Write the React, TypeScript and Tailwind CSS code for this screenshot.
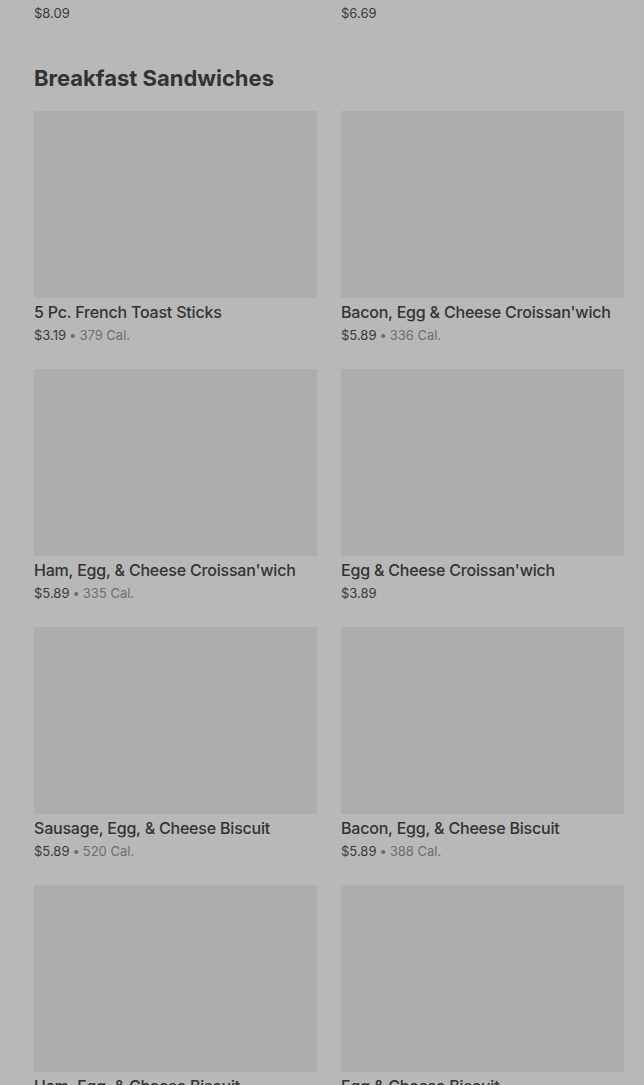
type Item = {
  name: string;
  price: string;
  cal?: string;
};

const items: Item[] = [
  { name: "5 Pc. French Toast Sticks", price: "$3.19", cal: "379 Cal." },
  { name: "Bacon, Egg & Cheese Croissan'wich", price: "$5.89", cal: "336 Cal." },
  { name: "Ham, Egg, & Cheese Croissan'wich", price: "$5.89", cal: "335 Cal." },
  { name: "Egg & Cheese Croissan'wich", price: "$3.89" },
  { name: "Sausage, Egg, & Cheese Biscuit", price: "$5.89", cal: "520 Cal." },
  { name: "Bacon, Egg, & Cheese Biscuit", price: "$5.89", cal: "388 Cal." },
  { name: "Ham, Egg, & Cheese Biscuit", price: "$5.89", cal: "330 Cal." },
  { name: "Egg & Cheese Biscuit", price: "$3.89" },
];

function MenuCard({ item }: { item: Item }) {
  return (
    <div className="flex flex-col">
      <div className="h-[187px] w-full bg-[#adadad]" />
      <div className="mt-[4px] text-[16px] leading-[20px] font-medium tracking-[-0.2px] text-[#333333] whitespace-nowrap">
        {item.name}
      </div>
      <div className="mt-[5px] text-[13px] leading-[16px] text-[#3a3a3a] whitespace-nowrap">
        {item.price}
        {item.cal && (
          <>
            <span className="mx-[3px] text-[#6e6e6e]">•</span>
            <span className="text-[#6e6e6e]">{item.cal}</span>
          </>
        )}
      </div>
    </div>
  );
}

export default function App() {
  return (
    <div
      className="min-h-[1085px] w-full overflow-hidden bg-[#b8b8b8] pl-[34px] pr-[20px]"
      style={{ fontFamily: "Inter, 'Liberation Sans', sans-serif" }}
    >
      {/* tail of previous section */}
      <div className="grid grid-cols-2 gap-x-[24px] pt-[5px]">
        <div className="text-[13px] leading-[16px] text-[#3a3a3a]">$8.09</div>
        <div className="text-[13px] leading-[16px] text-[#3a3a3a]">$6.69</div>
      </div>

      <h2 className="mt-[43px] text-[22px] leading-[28px] font-bold text-[#333333]">
        Breakfast Sandwiches
      </h2>

      <div className="mt-[19px] grid grid-cols-2 gap-x-[24px] gap-y-[26px]">
        {items.map((item, i) => (
          <MenuCard key={i} item={item} />
        ))}
      </div>
    </div>
  );
}
